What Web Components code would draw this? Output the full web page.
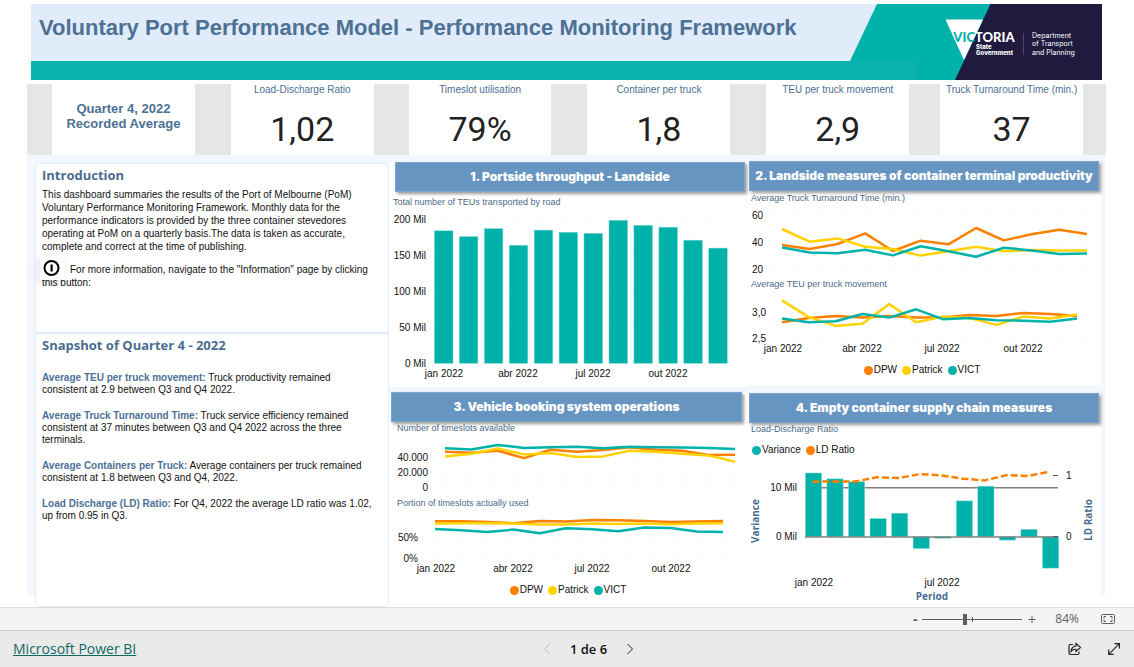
<!DOCTYPE html>
<html lang="en">
<head>
<meta charset="utf-8">
<title>Voluntary Port Performance Model</title>
<style>
body { margin: 0; background: #fff; font-family: "Liberation Sans", Arial, sans-serif; }
</style>
</head>
<body>
<port-report></port-report>
<script>
const define = (name, html, setup) => {
  const template = document.createElement('template');
  template.innerHTML = html;
  customElements.define(name, class extends HTMLElement {
    constructor() {
      super();
      this.attachShadow({ mode: 'open' }).append(template.content.cloneNode(true));
    }
    connectedCallback() { if (setup) setup(this, this.shadowRoot); }
  });
};

const COLORS = { DPW: '#ff7f00', Patrick: '#ffd200', VICT: '#00b2a9', Variance: '#00b2a9', 'LD Ratio': '#ff7f00' };
const chartStyle = `<style>
  :host { display: block; }
  svg { display: block; width: 100%; height: auto; }
  text { font: 10px "Liberation Sans", Arial, sans-serif; fill: #111; }
  .axis { font: bold 10px "Open Sans", "Noto Sans", sans-serif; fill: #4a6d8f; }
  .end { text-anchor: end; }
  .mid { text-anchor: middle; }
  .grid { stroke: #ededed; stroke-dasharray: 1 5; }
  .rule { stroke: #808080; stroke-width: 1.5; }
  .tick { stroke: #555; }
  .bar { fill: #00b2a9; stroke: #7fd8d3; stroke-width: .5; }
  .line { fill: none; stroke-width: 2.5; stroke-linejoin: round; }
</style>`;

/* Each chart area is a window onto one shared report canvas, so axes in stacked charts line up. */
const CHARTS = {
  turnaround: {
    label: 'Average Truck Turnaround Time', box: [747, 205, 354, 73], x: [782, 1087], grid: [768, 1096],
    axis: { a: [20, 269], b: [60, 215], labels: [['60', 60], ['40', 40], ['20', 20]], right: 763 },
    series: {
      DPW: [37.8, 34.8, 38.5, 46.4, 33.3, 41, 38.3, 50.4, 41.2, 45.7, 49.1, 45.9],
      Patrick: [49.6, 40.2, 42.7, 36.5, 34.8, 29.9, 33.1, 36.5, 33.1, 34.1, 33.8, 33.6],
      VICT: [36, 32.3, 31.6, 34.3, 30.1, 36.8, 33.1, 29.1, 35.8, 33.8, 31.1, 31.4] }
  },
  movement: {
    label: 'Average TEU per truck movement', box: [747, 290, 354, 70], x: [782, 1077], grid: [774, 1092],
    axis: { a: [2.5, 338.4], b: [3, 312.4], labels: [['3,0', 3], ['2,5', 2.5]], right: 766 },
    series: {
      DPW: [2.81, 2.89, 2.93, 2.9, 2.93, 2.9, 2.9, 2.95, 2.93, 2.99, 2.97, 2.93],
      Patrick: [3.23, 2.91, 2.74, 2.78, 3.16, 2.81, 2.92, 2.89, 2.76, 2.92, 2.88, 2.96],
      VICT: [2.88, 2.81, 2.83, 2.97, 2.9, 3.06, 2.87, 2.89, 2.85, 2.84, 2.82, 2.88] },
    months: [[783, 'jan 2022'], [862, 'abr 2022'], [942, 'jul 2022'], [1023, 'out 2022']], monthY: 352
  },
  available: {
    label: 'Number of timeslots available', box: [389, 435, 358, 61], x: [445, 735], grid: [435, 742],
    axis: { a: [0, 487.4], b: [40, 457.4], labels: [['40.000', 40], ['20.000', 20], ['0', 0]], right: 428 },
    series: {
      DPW: [47.5, 46.2, 48.8, 39.1, 50.1, 47.5, 49.7, 53.6, 50.1, 48.8, 43.1, 43.5],
      Patrick: [41.3, 44.8, 51.9, 44, 45.7, 40.4, 41.3, 48.8, 47.5, 44.8, 42.6, 34.3],
      VICT: [52.3, 50.5, 56.7, 52.7, 53.6, 54.1, 52.3, 54.1, 53.6, 53.2, 52.7, 51] }
  },
  used: {
    label: 'Portion of timeslots actually used', box: [389, 510, 358, 70], x: [435, 723], grid: [426, 738],
    axis: { a: [0, 558.4], b: [50, 537.2], labels: [['50%', 50], ['0%', 0]], right: 418 },
    series: {
      DPW: [87.5, 87.5, 86, 83, 88, 87, 90.5, 90, 88, 86, 87, 88],
      Patrick: [82, 83, 83, 82, 80, 80, 82, 81, 82, 80.5, 82, 83],
      VICT: [69.5, 66.4, 62.5, 68, 59.4, 71, 68.8, 64, 72.7, 71.9, 63.3, 62.5] },
    months: [[436, 'jan 2022'], [513, 'abr 2022'], [592, 'jul 2022'], [671, 'out 2022']], monthY: 572
  }
};
const scale = ([v0, y0], [v1, y1]) => v => y0 + (v - v0) / (v1 - v0) * (y1 - y0);
const months = (list, y) => list.map(([x, t]) => `<text class="mid" x="${x}" y="${y}">${t}</text>`).join('');
const svg = (box, label, body) => `${chartStyle}<svg viewBox="${box.join(' ')}" role="img" aria-label="${label}">${body}</svg>`;

define('trend-chart', '', (host, root) => {
  const c = CHARTS[host.getAttribute('name')];
  const y = scale(c.axis.a, c.axis.b);
  let out = c.axis.labels.map(([t, v]) =>
    `<path class="grid" d="M${c.grid[0]} ${y(v)}H${c.grid[1]}"/><text class="end" x="${c.axis.right}" y="${Math.round(y(v)) + 4}">${t}</text>`).join('');
  for (const [name, values] of Object.entries(c.series)) {
    const step = (c.x[1] - c.x[0]) / 11;
    out += `<polyline class="line" stroke="${COLORS[name]}" points="${values.map((v, i) => `${(c.x[0] + i * step).toFixed(1)},${y(v).toFixed(1)}`).join(' ')}"/>`;
  }
  if (c.months) out += months(c.months, c.monthY);
  root.innerHTML = svg(c.box, c.label, out);
});

define('throughput-chart', '', (host, root) => {
  const y = scale([0, 363.3], [200, 219.3]);
  let out = [200, 150, 100, 50, 0].map(v =>
    `<path class="grid" d="M434 ${y(v)}H728"/><text class="end" x="426" y="${Math.round(y(v)) + 4}">${v} Mil</text>`).join('');
  out += [184, 176, 187, 164, 185, 182, 180.5, 198.6, 191.7, 189, 171, 160].map((v, i) =>
    `<rect class="bar" x="${(434.4 + i * 24.94).toFixed(1)}" y="${y(v).toFixed(1)}" width="18.6" height="${(363.3 - y(v)).toFixed(1)}"/>`).join('');
  out += months([[444, 'jan 2022'], [518, 'abr 2022'], [593, 'jul 2022'], [668, 'out 2022']], 377);
  root.innerHTML = svg([389, 212, 358, 175], 'Total number of TEUs transported by road', out);
});

define('variance-chart', '', (host, root) => {
  const y = scale([0, 536.7], [10, 487.7]), ld = scale([0, 536.7], [1, 475.7]), x = i => 805.4 + i * 21.55;
  let out = `<path class="rule" d="M805 487.7H1058"/>`;
  out += [13, 11.8, 11.2, 3.7, 4.8, -2.4, -.3, 7.3, 10.3, -.7, 1.5, -6.4].map((v, i) =>
    `<rect class="bar" x="${x(i).toFixed(1)}" y="${Math.min(y(v), 536.7).toFixed(1)}" width="16.2" height="${Math.abs(y(v) - 536.7).toFixed(1)}"/>`).join('');
  out += `<path class="rule" d="M805 536.9H1058"/><path class="tick" d="M1053 475.5H1058M1053 536.5H1058"/>`;
  out += `<polyline class="line" stroke="#ff7f00" stroke-dasharray="7 3" points="${[.9, .907, .907, .973, .962, 1.027, 1.005, .951, .923, 1.01, .995, 1.066].map((v, i) => `${(x(i) + 7).toFixed(1)},${ld(v).toFixed(1)}`).join(' ')}"/>`;
  out += `<text class="end" x="797" y="491">10 Mil</text><text class="end" x="797" y="540">0 Mil</text>
    <text x="1066" y="479">1</text><text x="1066" y="540">0</text>
    <text class="axis mid" transform="translate(759 521) rotate(-90)">Variance</text>
    <text class="axis mid" transform="translate(1092 520) rotate(-90)">LD Ratio</text>
    <text class="axis mid" x="932" y="600">Period</text>`;
  out += months([[814, 'jan 2022'], [942, 'jul 2022']], 586);
  root.innerHTML = svg([747, 460, 354, 147], 'Variance and load-discharge ratio by period', out);
});

define('chart-legend', `<style>
  :host { display: block; }
  ul { display: flex; justify-content: var(--align, center); gap: 5px; height: 20px; align-items: center; margin: 0; padding: 0; list-style: none; font-size: 10px; line-height: 12px; color: #111; }
  li { display: flex; align-items: center; gap: 1px; }
  i { width: 9px; height: 9px; border-radius: 50%; }
</style><ul></ul>`, (host, root) => {
  root.querySelector('ul').innerHTML = host.getAttribute('items').split(',').map(n =>
    `<li><i style="background:${COLORS[n]}"></i>${n}</li>`).join('');
});

define('chart-panel', `<style>
  :host { display: block; background: #fff; }
  h2 { box-sizing: border-box; height: 30px; margin: var(--bar, 0 2px); display: flex; align-items: center; justify-content: center;
       background: #6795c1; border: 1px solid #7ba5cc; color: #fff; box-shadow: 2px 2px 3px rgba(0,0,0,.4);
       font: 900 12px/16px Inter, sans-serif; white-space: nowrap; position: relative; }
</style><h2></h2><slot></slot>`, (host, root) => {
  root.querySelector('h2').textContent = host.getAttribute('heading');
});

define('chart-title', `<style>
  :host { display: block; padding: var(--pad, 1px 4px); }
  h3 { margin: 0; font: 9px/12px "Liberation Sans", Arial, sans-serif; color: #4b6a88; }
</style><h3><slot></slot></h3>`);

define('report-header', `<style>
  :host { display: block; margin: 4px 32px 0 31px; }
  header { display: flex; justify-content: space-between; background: linear-gradient(#0ab3ab, #0ab3ab) left bottom / 100% 19px no-repeat #e0ecf9; }
  h1 { margin: 10px 0 0 8px; font: bold 22px/28px "Liberation Sans", Arial, sans-serif; color: #4d7195; white-space: nowrap; }
  svg { flex: none; width: 261px; height: 76px; margin-left: -40px; }
  .brand { font: 900 13px Lato, sans-serif; }
  .gov { font: 800 6px Inter, sans-serif; }
  .dept { font: 7px Inter, sans-serif; }
</style>
<header>
  <h1>Voluntary Port Performance Model - Performance Monitoring Framework</h1>
  <svg viewBox="841 4 261 76" role="img" aria-label="Victoria State Government, Department of Transport and Planning">
    <path fill="#00b2a9" d="M877 4H1000V80H841Z"/>
    <path fill="#0ab3ab" d="M841 61H916V80H841Z"/>
    <path fill="#201a3f" d="M990.500 4H1102V80H955Z"/>
    <path fill="#fff" d="M945.500 19.500H983L964 60Z"/>
    <g class="brand"><text x="975" y="41.500" text-anchor="end" fill="#00b2a9">VIC</text><text x="975" y="41.500" fill="#fff">TORIA</text></g>
    <g class="gov" fill="#fff"><text x="976" y="49">State</text><text x="976" y="55">Government</text></g>
    <path stroke="#4d4766" d="M1023.500 33V55"/>
    <g class="dept" fill="#fff"><text x="1032" y="38">Department</text><text x="1032" y="46">of Transport</text><text x="1032" y="55">and Planning</text></g>
  </svg>
</header>`);

define('kpi-strip', `<style>
  :host { display: grid; grid-template-columns: 25px 1fr 36px 1fr 35px 1fr 36px 1fr 36px 1fr 31px 1fr 23px;
          margin: 4px 28px 0 27px; height: 71px; background: #e6e6e6; }
  ::slotted(:nth-child(1)) { grid-column: 2; }
  ::slotted(:nth-child(2)) { grid-column: 4; }
  ::slotted(:nth-child(3)) { grid-column: 6; }
  ::slotted(:nth-child(4)) { grid-column: 8; }
  ::slotted(:nth-child(5)) { grid-column: 10; }
  ::slotted(:nth-child(6)) { grid-column: 12; }
</style><slot></slot>`);

define('kpi-card', `<style>
  :host { display: flex; flex-direction: column; align-items: center; background: #fff; white-space: nowrap; min-width: 0; }
  span { font-size: 10px; line-height: 12px; color: #4b6f93; }
  strong { margin-top: 13px; font: 34px/40px Roboto, sans-serif; color: #222; }
</style><span></span><strong><slot></slot></strong>`, (host, root) => {
  root.querySelector('span').textContent = host.getAttribute('label');
});

define('kpi-caption', `<style>
  :host { display: flex; align-items: center; justify-content: center; background: #fff; text-align: center; }
  h2 { margin: 0 0 7px; font-size: 13px; line-height: 15px; color: #4d7195; }
</style><h2><slot></slot></h2>`);

define('text-card', `<style>
  :host { display: block; box-sizing: border-box; background: #fff; border: 1px solid #e1edfa; border-radius: 4px; padding: 2px 11px 2px 6px;
          font-size: 10px; line-height: var(--line, 12px); color: #111; }
  h2 { margin: 0 0 var(--after, 4px); font: bold 13px/18px "Open Sans", "Noto Sans", sans-serif; color: #4a6d8f; }
</style><h2></h2><slot></slot>`, (host, root) => {
  root.querySelector('h2').textContent = host.getAttribute('heading');
});

define('info-button', `<style>
  :host { position: absolute; left: -2px; top: -7px; }
  button { display: block; width: 24px; height: 24px; padding: 0; border: 0; background: #fff; box-shadow: -2px 2px 8px rgba(0,0,0,.12); }
  svg { display: block; margin: auto; }
</style><button aria-label="Information"><svg width="18" height="18" viewBox="0 0 18 18">
  <circle cx="8.500" cy="9" r="7" fill="none" stroke="#000" stroke-width="2"/><path fill="#000" d="M7.500 5.500H9.700V12.500H7.500Z"/></svg></button>`);

define('report-body', `<style>
  :host { display: grid; grid-template-columns: minmax(0, 354fr) minmax(0, 358fr) minmax(0, 354fr); margin: 0 29px 0 27px; padding: 6px 4px 0 8px;
          background: linear-gradient(#f1f7fc, #f1f7fc) 0 0 / 100% calc(100% - 11px) no-repeat; }
  section { display: flex; flex-direction: column; }
  .text { padding-top: 2px; }
  .text text-card:first-child { --line: 13px; min-height: 170px; }
  .text text-card:first-child p { margin-bottom: 10px; }
  .text text-card:last-child { --after: 18px; flex: 1; }
  .left { padding-top: 1px; gap: 5px; }
  .right { gap: 8px; }
  .right chart-panel:last-child { flex: 1; }
  p { margin: 0 0 14px; }
  .more { position: relative; text-indent: 28px; }
  b { color: #4d7195; }
</style>
<section class="text">
  <text-card heading="Introduction">
    <p>This dashboard summaries the results of the Port of Melbourne (PoM) Voluntary Performance Monitoring Framework. Monthly data for the performance indicators is provided by the three container stevedores operating at PoM on a quarterly basis.The data is taken as accurate, complete and correct at the time of publishing.</p>
    <p class="more"><info-button></info-button>For more information, navigate to the "Information" page by clicking this button:</p>
  </text-card>
  <text-card heading="Snapshot of Quarter 4 - 2022">
    <p><b>Average TEU per truck movement:</b> Truck productivity remained consistent at 2.9 between Q3 and Q4 2022.</p>
    <p><b>Average Truck Turnaround Time:</b> Truck service efficiency remained consistent at 37 minutes between Q3 and Q4 2022 across the three terminals.</p>
    <p><b>Average Containers per Truck:</b> Average containers per truck remained consistent at 1.8 between Q3 and Q4, 2022.</p>
    <p><b>Load Discharge (LD) Ratio:</b> For Q4, 2022 the average LD ratio was 1.02, up from 0.95 in Q3.</p>
  </text-card>
</section>
<section class="left">
  <chart-panel heading="1. Portside throughput - Landside" style="--bar: 0 2px 0 6px">
    <chart-title style="--pad: 4px">Total number of TEUs transported by road</chart-title>
    <throughput-chart></throughput-chart>
  </chart-panel>
  <chart-panel heading="3. Vehicle booking system operations" style="--bar: 0 5px 0 2px">
    <chart-title style="--pad: 0 8px 1px">Number of timeslots available</chart-title>
    <trend-chart name="available"></trend-chart>
    <chart-title style="--pad: 1px 8px">Portion of timeslots actually used</chart-title>
    <trend-chart name="used"></trend-chart>
    <chart-legend items="DPW,Patrick,VICT"></chart-legend>
  </chart-panel>
</section>
<section class="right">
  <chart-panel heading="2. Landside measures of container terminal productivity">
    <chart-title>Average Truck Turnaround Time (min.)</chart-title>
    <trend-chart name="turnaround"></trend-chart>
    <chart-title style="--pad: 0 4px">Average TEU per truck movement</chart-title>
    <trend-chart name="movement"></trend-chart>
    <chart-legend items="DPW,Patrick,VICT" style="padding: 0 4px 5px 0"></chart-legend>
  </chart-panel>
  <chart-panel heading="4. Empty container supply chain measures">
    <chart-title style="--pad: 0 4px 5px">Load-Discharge Ratio</chart-title>
    <chart-legend items="Variance,LD Ratio" style="--align: flex-start; padding-left: 5px"></chart-legend>
    <variance-chart></variance-chart>
  </chart-panel>
</section>`);

define('zoom-bar', `<style>
  :host { display: flex; align-items: center; justify-content: flex-end; box-sizing: border-box; height: 24px; padding-right: 18px;
          background: #f4f4f4; border-top: 1px solid #dcdcdc; border-bottom: 1px solid #c8c8c8; color: #605e5c; font: 12px/16px "Open Sans", "Noto Sans", sans-serif; }
  button { width: 10px; height: 16px; padding: 0; border: 0; background: none; color: #605e5c; font: bold 14px/14px "Open Sans", sans-serif; }
  input { appearance: none; width: 100px; height: 16px; margin: 0 5px 0 2px; 
          background: linear-gradient(#605e5c, #605e5c) 0 8px / 100% 1px no-repeat, linear-gradient(#605e5c, #605e5c) 50px 6px / 1px 5px no-repeat; }
  input::-webkit-slider-thumb { appearance: none; width: 4px; height: 11px; background: #605e5c; }
  output { margin: 0 22px 0 18px; }
  .fit { width: 15px; }
  svg { display: block; fill: none; stroke: #605e5c; }
</style>
<button aria-label="Zoom out">-</button>
<input type="range" aria-label="Zoom" min="0" max="100" value="42">
<button aria-label="Zoom in"><svg width="10" height="16" viewBox="0 0 10 16"><path d="M1.500 8.500H8.500M5 5V12"/></svg></button>
<output>84%</output>
<button class="fit" aria-label="Fit to page"><svg width="15" height="16" viewBox="0 0 15 16"><rect x=".5" y="3.500" width="13" height="9" rx="1"/><path d="M5 5.500H3V7.500M9 5.500H11V7.500M5 10.500H3V8.500M9 10.500H11V8.500"/></svg></button>`);

define('page-footer', `<style>
  :host { display: grid; grid-template-columns: 542fr auto 499fr; align-items: center; flex: 1; min-height: 36px; background: #eaeaea; 
          font: 14px/20px "Open Sans", "Noto Sans", sans-serif; }
  a { margin-left: 13px; color: #0f6a62; }
  nav, .tools { display: flex; align-items: center; }
  nav { gap: 19px; color: #111; font-size: 13px; font-weight: 600; }
  .tools { justify-content: flex-end; gap: 25px; padding-right: 14px; }
  button { padding: 0; border: 0; background: none; }
  svg { display: block; fill: none; stroke: #222; }
</style>
<div><a href="#">Microsoft Power BI</a></div>
<nav aria-label="Pages">
  <button aria-label="Previous page" disabled><svg width="8" height="12" viewBox="0 0 8 12"><path stroke="#bbb" d="M6.500 1L1.500 6L6.500 11"/></svg></button>
  <span>1 de 6</span>
  <button aria-label="Next page"><svg width="8" height="12" viewBox="0 0 8 12"><path d="M1.500 1L6.500 6L1.500 11"/></svg></button>
</nav>
<div class="tools">
  <button aria-label="Share"><svg width="16" height="16" viewBox="0 0 16 16" stroke-width="1.200"><path d="M6 3.500H3.500Q2 3.500 2 5V12Q2 13.500 3.500 13.500H10.500Q12 13.500 12 12V10.500M9 2.500L13.500 6.500L9 10.500V8.300Q6 8 4 10.500Q4.500 5.500 9 4.800Z"/></svg></button>
  <button aria-label="Full screen"><svg width="12" height="16" viewBox="0 0 12 16" stroke-width="1.200"><path d="M.8 13.300L11.300 2.700M6.500 2.600H11.400V7.500M.7 8.500V13.400H5.600"/></svg></button>
</div>`);

define('port-report', `<style>
  :host { display: flex; flex-direction: column; min-height: 100vh; }
</style>
<report-header></report-header>
<kpi-strip>
  <kpi-caption>Quarter 4, 2022<br>Recorded Average</kpi-caption>
  <kpi-card label="Load-Discharge Ratio">1,02</kpi-card>
  <kpi-card label="Timeslot utilisation">79%</kpi-card>
  <kpi-card label="Container per truck">1,8</kpi-card>
  <kpi-card label="TEU per truck movement">2,9</kpi-card>
  <kpi-card label="Truck Turnaround Time (min.)">37</kpi-card>
</kpi-strip>
<report-body></report-body>
<zoom-bar></zoom-bar>
<page-footer></page-footer>`);
</script>
</body>
</html>
